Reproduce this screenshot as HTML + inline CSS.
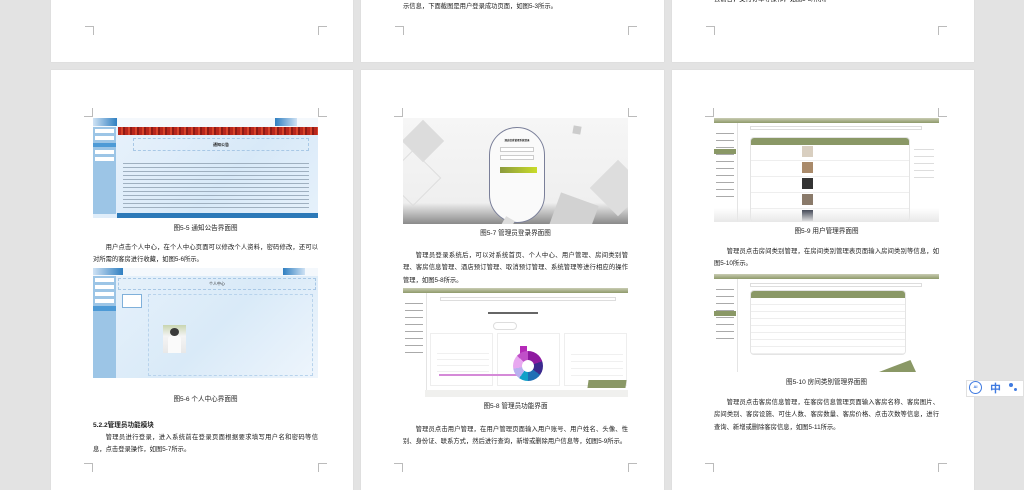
<!DOCTYPE html>
<html><head><meta charset="utf-8"><style>
*{margin:0;padding:0;box-sizing:border-box}
body{width:1024px;height:483px;overflow:hidden;background:#e3e3e3;position:relative;font-family:"Liberation Sans","Noto Sans CJK SC",sans-serif;color:#222}
.pg{position:absolute;background:#fff;box-shadow:0 0 1px #ccc}
.a{position:absolute}
.cm{position:absolute;width:9px;height:9px;border-color:#bbb;border-style:solid;border-width:0}
.t{position:absolute;font-size:6.3px;line-height:12.3px;text-align:justify;color:#1a1a1a}
.cap{position:absolute;font-size:6.6px;text-align:center;color:#222}
</style></head><body>

<div class="pg" style="left:51px;top:0;width:302px;height:62px"></div>
<div class="pg" style="left:361px;top:0;width:303px;height:62px"></div>
<div class="pg" style="left:672px;top:0;width:302px;height:62px"></div>
<div class="t" style="left:403px;top:1px">示信息，下面截图是用户登录成功页面，如图5-3所示。</div>
<div class="t" style="left:714px;top:-6px">去前台，支付订单等操作，如图5-5所示。</div>
<div class="cm" style="left:85px;top:26px;border-right-width:1px;border-top-width:1px"></div>
<div class="cm" style="left:318px;top:26px;border-left-width:1px;border-top-width:1px"></div>
<div class="cm" style="left:395px;top:26px;border-right-width:1px;border-top-width:1px"></div>
<div class="cm" style="left:628px;top:26px;border-left-width:1px;border-top-width:1px"></div>
<div class="cm" style="left:706px;top:26px;border-right-width:1px;border-top-width:1px"></div>
<div class="cm" style="left:938px;top:26px;border-left-width:1px;border-top-width:1px"></div>

<div class="pg" style="left:51px;top:70px;width:302px;height:420px"></div>
<div class="pg" style="left:361px;top:70px;width:303px;height:420px"></div>
<div class="pg" style="left:672px;top:70px;width:302px;height:420px"></div>

<div class="cm" style="left:84px;top:108px;border-right-width:1px;border-bottom-width:1px"></div>
<div class="cm" style="left:318px;top:108px;border-left-width:1px;border-bottom-width:1px"></div>
<div class="cm" style="left:394px;top:108px;border-right-width:1px;border-bottom-width:1px"></div>
<div class="cm" style="left:628px;top:108px;border-left-width:1px;border-bottom-width:1px"></div>
<div class="cm" style="left:705px;top:108px;border-right-width:1px;border-bottom-width:1px"></div>
<div class="cm" style="left:938px;top:108px;border-left-width:1px;border-bottom-width:1px"></div>
<div class="cm" style="left:84px;top:463px;border-right-width:1px;border-top-width:1px"></div>
<div class="cm" style="left:318px;top:463px;border-left-width:1px;border-top-width:1px"></div>
<div class="cm" style="left:394px;top:463px;border-right-width:1px;border-top-width:1px"></div>
<div class="cm" style="left:628px;top:463px;border-left-width:1px;border-top-width:1px"></div>
<div class="cm" style="left:705px;top:463px;border-right-width:1px;border-top-width:1px"></div>
<div class="cm" style="left:938px;top:463px;border-left-width:1px;border-top-width:1px"></div>

<!-- PAGE 1 -->
<div class="a" style="left:93px;top:118px;width:225px;height:100px;background:linear-gradient(135deg,#eaf3fc,#d8e9f8 60%,#e6f1fb);overflow:hidden">
  <div class="a" style="left:0;top:0;width:225px;height:9px;background:#f4f8fc"></div>
  <div class="a" style="left:0;top:0;width:24px;height:8px;background:linear-gradient(90deg,#cfe2f4,#2f7fc1)"></div>
  <div class="a" style="left:182px;top:0;width:22px;height:8px;background:linear-gradient(90deg,#2f7fc1,#cfe2f4)"></div>
  <div class="a" style="left:0;top:9px;width:23px;height:87px;background:#9cc5e6"></div>
  <div class="a" style="left:2px;top:11px;width:19px;height:4px;background:#fff"></div>
  <div class="a" style="left:2px;top:18px;width:19px;height:4px;background:#fff"></div>
  <div class="a" style="left:0;top:25px;width:23px;height:4px;background:#4d9ad6"></div>
  <div class="a" style="left:2px;top:32px;width:19px;height:4px;background:#fff"></div>
  <div class="a" style="left:2px;top:39px;width:19px;height:4px;background:#fff"></div>
  <div class="a" style="left:25px;top:9px;width:200px;height:8px;background:repeating-linear-gradient(90deg,#b8261c 0 3px,#d7432a 3px 5px,#8e1a14 5px 7px)"></div>
  <div class="a" style="left:40px;top:20px;width:176px;height:13px;border:1px dashed #a8c8e6;font-size:4px;text-align:center;line-height:11px;font-weight:bold">通知公告</div>
  <div class="a" style="left:30px;top:42px;width:186px;height:48px;background:repeating-linear-gradient(180deg,transparent 0 3px,#9fb0c0 3px 4px)"></div>
  <div class="a" style="left:24px;top:95px;width:201px;height:5px;background:#2c79b8"></div>
</div>
<div class="cap" style="left:93px;top:222px;width:225px">图5-5 通知公告界面图</div>
<div class="t" style="left:93px;top:242px;width:225px;text-indent:12.6px">用户点击个人中心，在个人中心页面可以修改个人资料，密码修改，还可以对所需的客房进行收藏，如图5-6所示。</div>
<div class="a" style="left:93px;top:268px;width:225px;height:110px;background:linear-gradient(135deg,#e8f2fb,#d9eaf8 55%,#eef5fc);overflow:hidden">
  <div class="a" style="left:0;top:0;width:225px;height:8px;background:#f4f8fc"></div>
  <div class="a" style="left:0;top:0;width:30px;height:7px;background:linear-gradient(90deg,#cfe2f4,#2f7fc1)"></div>
  <div class="a" style="left:190px;top:0;width:22px;height:7px;background:linear-gradient(90deg,#2f7fc1,#cfe2f4)"></div>
  <div class="a" style="left:0;top:8px;width:23px;height:102px;background:#9cc5e6"></div>
  <div class="a" style="left:2px;top:10px;width:19px;height:4px;background:#fff"></div>
  <div class="a" style="left:2px;top:17px;width:19px;height:4px;background:#fff"></div>
  <div class="a" style="left:2px;top:24px;width:19px;height:4px;background:#fff"></div>
  <div class="a" style="left:2px;top:31px;width:19px;height:4px;background:#fff"></div>
  <div class="a" style="left:0;top:38px;width:23px;height:5px;background:#4d9ad6"></div>
  <div class="a" style="left:25px;top:10px;width:198px;height:12px;border:1px dashed #a8c8e6;font-size:4px;text-align:center;line-height:10px">个人中心</div>
  <div class="a" style="left:29px;top:26px;width:20px;height:14px;background:#fff;border:1px solid #7fb0da"></div>
  <div class="a" style="left:55px;top:26px;width:165px;height:82px;border:1px dashed #b8d3ec"></div>
  <div class="a" style="left:70px;top:57px;width:23px;height:28px;background:linear-gradient(180deg,#c8d5b0,#f4f4f4 40%,#e8e8e8)"></div>
  <div class="a" style="left:77px;top:60px;width:9px;height:8px;border-radius:50%;background:#3a3a3a"></div>
  <div class="a" style="left:75px;top:68px;width:13px;height:17px;background:#fafafa;border-radius:3px 3px 0 0"></div>
</div>
<div class="cap" style="left:93px;top:393px;width:225px">图5-6 个人中心界面图</div>
<div class="a" style="left:93px;top:419px;font-size:6.6px;font-weight:bold">5.2.2管理员功能模块</div>
<div class="t" style="left:93px;top:432px;width:225px;text-indent:12.6px">管理员进行登录，进入系统前在登录页面根据要求填写用户名和密码等信息，点击登录操作，如图5-7所示。</div>

<!-- PAGE 2 -->
<div class="a" style="left:403px;top:118px;width:225px;height:106px;background:linear-gradient(180deg,#f6f6f6 0,#efefef 80%,#8a8a8a 100%);overflow:hidden">
  <div class="a" style="left:5px;top:8px;width:30px;height:30px;background:#dcdcdc;transform:rotate(45deg)"></div>
  <div class="a" style="left:-10px;top:40px;width:40px;height:40px;border:1px solid #ddd;transform:rotate(45deg)"></div>
  <div class="a" style="left:170px;top:8px;width:8px;height:8px;background:#ccc;transform:rotate(10deg)"></div>
  <div class="a" style="left:195px;top:50px;width:40px;height:40px;background:#ddd;transform:rotate(45deg)"></div>
  <div class="a" style="left:150px;top:80px;width:40px;height:40px;background:#d2d2d2;transform:rotate(20deg)"></div>
  <div class="a" style="left:86px;top:9px;width:56px;height:96px;border:1px solid #7a7f99;border-radius:28px;background:#fafafa"></div>
  <div class="a" style="left:97px;top:20px;width:34px;font-size:2.5px;font-weight:bold;text-align:center">酒店信息管理系统登录</div>
  <div class="a" style="left:97px;top:29px;width:34px;height:5px;border:1px solid #ccc;background:#fff"></div>
  <div class="a" style="left:97px;top:37px;width:34px;height:5px;border:1px solid #ccc;background:#fff"></div>
  <div class="a" style="left:97px;top:49px;width:37px;height:6px;background:linear-gradient(90deg,#8b9a3e,#c9dc2a)"></div>
  <div class="a" style="left:100px;top:100px;width:10px;height:10px;background:#ddd;transform:rotate(30deg)"></div>
</div>
<div class="cap" style="left:403px;top:227px;width:225px">图5-7 管理员登录界面图</div>
<div class="t" style="left:403px;top:250px;width:225px;text-indent:12.6px">管理员登录系统后，可以对系统首页、个人中心、用户管理、房间类别管理、客房信息管理、酒店预订管理、取消预订管理、系统管理等进行相应的操作管理，如图5-8所示。</div>
<div class="a" style="left:403px;top:288px;width:225px;height:109px;background:#fff;overflow:hidden">
  <div class="a" style="left:0;top:0;width:225px;height:5px;background:linear-gradient(180deg,#c9ccb3,#8e9a6a)"></div>
  <div class="a" style="left:23px;top:5px;width:1px;height:104px;background:#e4e4e4"></div>
  <div class="a" style="left:2px;top:10px;width:18px;height:60px;background:repeating-linear-gradient(180deg,#fff 0 5px,#aaa 5px 6px,#fff 6px 7px)"></div>
  <div class="a" style="left:37px;top:9px;width:176px;height:4px;border:1px solid #ddd"></div>
  <div class="a" style="left:85px;top:24px;width:50px;height:2px;background:#666"></div>
  <div class="a" style="left:90px;top:34px;width:24px;height:8px;border:1px solid #ddd;border-radius:4px"></div>
  <div class="a" style="left:27px;top:45px;width:63px;height:53px;border:1px solid #eee"></div>
  <div class="a" style="left:94px;top:45px;width:63px;height:53px;border:1px solid #eee"></div>
  <div class="a" style="left:161px;top:45px;width:63px;height:53px;border:1px solid #eee"></div>
  <div class="a" style="left:34px;top:60px;width:52px;height:28px;background:repeating-linear-gradient(180deg,transparent 0 5px,#f0f0f0 5px 6px)"></div>
  <div class="a" style="left:117px;top:58px;width:7px;height:30px;background:#b52ab8"></div>
  <div class="a" style="left:36px;top:86px;width:80px;height:2px;background:#d58ad8"></div>
  <div class="a" style="left:110px;top:63px;width:30px;height:30px;border-radius:50%;background:conic-gradient(#8e1aa0 0 20%,#3b2a8e 20% 35%,#1f6fb5 35% 50%,#12a0c8 50% 60%,#b8b0f0 60% 72%,#e8a8f0 72% 87%,#c050c8 87% 100%)"></div>
  <div class="a" style="left:119px;top:72px;width:12px;height:12px;border-radius:50%;background:#fff"></div>
  <div class="a" style="left:168px;top:60px;width:52px;height:28px;background:repeating-linear-gradient(180deg,transparent 0 6px,#f0f0f0 6px 7px)"></div>
  <div class="a" style="left:22px;top:102px;width:203px;height:7px;background:#f0f0ee"></div>
  <div class="a" style="left:185px;top:92px;width:38px;height:8px;background:#8a9866;transform:skewX(-8deg)"></div>
</div>
<div class="cap" style="left:403px;top:400px;width:225px">图5-8 管理员功能界面</div>
<div class="t" style="left:403px;top:424px;width:225px;text-indent:12.6px">管理员点击用户管理，在用户管理页面输入用户账号、用户姓名、头像、性别、身份证、联系方式，然后进行查询，新增或删除用户信息等，如图5-9所示。</div>

<!-- PAGE 3 -->
<div class="a" style="left:714px;top:118px;width:225px;height:104px;background:#fff;overflow:hidden">
  <div class="a" style="left:0;top:0;width:225px;height:5px;background:linear-gradient(180deg,#c9ccb3,#8e9a6a)"></div>
  <div class="a" style="left:23px;top:5px;width:1px;height:99px;background:#e4e4e4"></div>
  <div class="a" style="left:2px;top:10px;width:18px;height:70px;background:repeating-linear-gradient(180deg,#fff 0 5px,#aaa 5px 6px,#fff 6px 7px)"></div>
  <div class="a" style="left:0;top:31px;width:22px;height:5px;background:#8a9866"></div>
  <div class="a" style="left:36px;top:8px;width:172px;height:4px;border:1px solid #ddd"></div>
  <div class="a" style="left:36px;top:19px;width:160px;height:85px;border:1px solid #e4e4e4;border-radius:4px;overflow:hidden">
    <div class="a" style="left:0;top:0;width:160px;height:7px;background:#8a9866"></div>
    <div class="a" style="left:0;top:7px;width:160px;height:80px;background:repeating-linear-gradient(180deg,#fff 0 15px,#eee 15px 16px)"></div>
  </div>
  <div class="a" style="left:88px;top:28px;width:11px;height:11px;background:#d9cfc0"></div>
  <div class="a" style="left:88px;top:44px;width:11px;height:11px;background:#a98a6a"></div>
  <div class="a" style="left:88px;top:60px;width:11px;height:11px;background:#333"></div>
  <div class="a" style="left:88px;top:76px;width:11px;height:11px;background:#8a7a6a"></div>
  <div class="a" style="left:88px;top:92px;width:11px;height:11px;background:#2a3040"></div>
  <div class="a" style="left:200px;top:25px;width:20px;height:40px;background:repeating-linear-gradient(180deg,transparent 0 6px,#ddd 6px 7px)"></div>
  <div class="a" style="left:0;top:90px;width:225px;height:14px;background:linear-gradient(180deg,rgba(255,255,255,0),#e8e8e8)"></div>
</div>
<div class="cap" style="left:714px;top:225px;width:225px">图5-9 用户管理界面图</div>
<div class="t" style="left:714px;top:246px;width:225px;text-indent:12.6px">管理员点击房间类别管理，在房间类别管理表页面输入房间类别等信息，如图5-10所示。</div>
<div class="a" style="left:714px;top:274px;width:225px;height:98px;background:#fff;overflow:hidden">
  <div class="a" style="left:0;top:0;width:225px;height:5px;background:linear-gradient(180deg,#c9ccb3,#8e9a6a)"></div>
  <div class="a" style="left:23px;top:5px;width:1px;height:93px;background:#e4e4e4"></div>
  <div class="a" style="left:2px;top:10px;width:18px;height:60px;background:repeating-linear-gradient(180deg,#fff 0 5px,#aaa 5px 6px,#fff 6px 7px)"></div>
  <div class="a" style="left:0;top:37px;width:22px;height:5px;background:#8a9866"></div>
  <div class="a" style="left:36px;top:9px;width:172px;height:4px;border:1px solid #ddd"></div>
  <div class="a" style="left:36px;top:16px;width:156px;height:65px;border:1px solid #e4e4e4;border-radius:4px;overflow:hidden">
    <div class="a" style="left:0;top:0;width:156px;height:7px;background:#8a9866"></div>
    <div class="a" style="left:0;top:7px;width:156px;height:58px;background:repeating-linear-gradient(180deg,#fff 0 6px,#eee 6px 7px)"></div>
  </div>
  <div class="a" style="left:165px;top:86px;width:37px;height:12px;background:#8a9866;clip-path:polygon(0 100%,100% 100%,85% 0)"></div>
</div>
<div class="cap" style="left:714px;top:376px;width:225px">图5-10 房间类别管理界面图</div>
<div class="t" style="left:714px;top:397px;width:225px;text-indent:12.6px">管理员点击客房信息管理，在客房信息管理页面输入客房名称、客房图片、房间类别、客房设施、可住人数、客房数量、客房价格、点击次数等信息，进行查询、新增或删除客房信息，如图5-11所示。</div>

<div class="a" style="left:966px;top:380px;width:58px;height:17px;background:#fff;border:1px solid #e0e0e0"></div>
<div class="a" style="left:969px;top:381px;width:13px;height:13px;border:1.5px solid #3f7ae0;border-radius:50%;font-size:4px;color:#3f7ae0;text-align:center;line-height:10px;font-weight:bold">AI</div>
<div class="a" style="left:990px;top:380px;font-size:11px;color:#3f7ae0;font-weight:bold">中</div>
<div class="a" style="left:1009px;top:383px;width:4px;height:4px;border-radius:50%;background:#3f7ae0"></div>
<div class="a" style="left:1014px;top:388px;width:3px;height:3px;border-radius:50%;background:#3f7ae0"></div>
</body></html>
